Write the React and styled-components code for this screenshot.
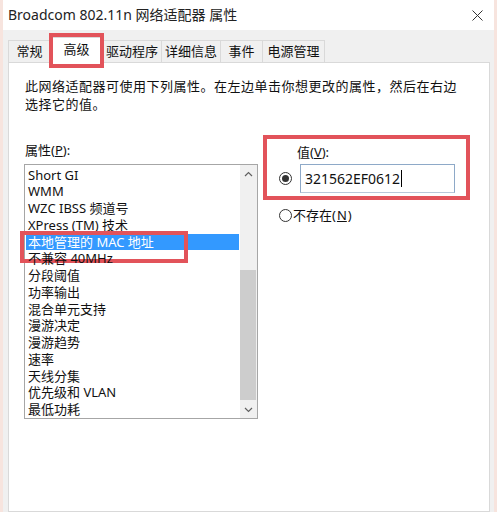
import React from 'react';
import styled, { createGlobalStyle, css } from 'styled-components';

const GlobalStyle = createGlobalStyle`
  html, body {
    margin: 0;
    padding: 0;
    background: #ffffff;
  }
  * {
    box-sizing: border-box;
  }
`;

const uiFont = `"Noto Sans", "Noto Sans CJK SC", sans-serif`;
const red = '#e2535a';

const Window = styled.div`
  width: 497px;
  height: 512px;
  overflow: hidden;
  display: flex;
  flex-direction: column;
  background: #f0f0f0;
  border-left: 3px solid #f7e4de;
  border-right: 3px solid #f7e4de;
  font-family: ${uiFont};
  color: #111;
`;

const TitleBar = styled.div`
  height: 30px;
  flex: none;
  display: flex;
  align-items: center;
  justify-content: space-between;
  padding: 0 11px 0 5px;
  background: #ffffff;
  font-size: 14px;
`;

const Title = styled.span`
  line-height: 20px;
  color: #222;
`;

const CloseIcon = () => (
  <svg width="11" height="11" viewBox="0 0 11 11">
    <path d="M0.5 0.5 L10.5 10.5 M10.5 0.5 L0.5 10.5" stroke="#333" strokeWidth="1" />
  </svg>
);

const Body = styled.div`
  flex: 1;
  display: flex;
  flex-direction: column;
  padding: 10px 4px 0 5px;
`;

const TabStrip = styled.div`
  display: flex;
  align-items: flex-end;
  height: 22px;
`;

const Tab = styled.div`
  position: relative;
  width: ${(p) => p.$w}px;
  height: 22px;
  margin-right: -1px;
  border: 1px solid #d9d9d9;
  border-bottom: 0;
  background: #f0f0f0;
  font-size: 13px;
  line-height: 20px;
  text-align: center;
  ${(p) =>
    p.$active &&
    css`
      height: 26px;
      margin-bottom: -1px;
      background: #ffffff;
      z-index: 1;
      line-height: 22px;
      &::after {
        content: '';
        position: absolute;
        left: -2px;
        right: -2px;
        top: -5px;
        bottom: -5px;
        border: 4px solid ${red};
      }
    `}
`;

const Panel = styled.div`
  flex: 1;
  background: #ffffff;
  border: 1px solid #d9d9d9;
  padding: 14px 15px 0 15px;
`;

const Description = styled.p`
  margin: 0;
  padding-left: 1px;
  font-size: 13px;
  line-height: 18px;
  letter-spacing: 0.5px;
`;

const Content = styled.div`
  display: flex;
  gap: 5px;
  margin-top: 22px;
`;

const LeftColumn = styled.div`
  width: 234px;
  padding-top: 6px;
`;

const FieldLabel = styled.div`
  font-size: 13px;
  line-height: 18px;
  margin-bottom: 5px;
  padding-left: 1px;
`;

const ListBox = styled.div`
  height: 255px;
  border: 1px solid #a6a6a6;
  display: flex;
`;

const Items = styled.div`
  flex: 1;
  padding: 1.6px 1px 0 1px;
`;

const Item = styled.div`
  position: relative;
  height: 16.75px;
  line-height: 16.75px;
  padding-left: 2px;
  font-size: 13px;
  white-space: nowrap;
  ${(p) =>
    p.$selected &&
    css`
      background: #3399ff;
      color: #ffffff;
      &::after {
        content: '';
        position: absolute;
        left: -6px;
        top: -3px;
        width: 160px;
        height: 24px;
        border: 4px solid ${red};
      }
    `}
`;

const ScrollBar = styled.div`
  width: 17px;
  display: flex;
  flex-direction: column;
  background: #f0f0f0;
`;

const ArrowButton = styled.div`
  height: 17px;
  flex: none;
  display: flex;
  align-items: center;
  justify-content: center;
`;

const Track = styled.div`
  flex: 1;
  padding: 88px 1px 0 0;
`;

const Thumb = styled.div`
  height: 130px;
  background: #cdcdcd;
`;

const Chevron = ({ up }) => (
  <svg width="9" height="6" viewBox="0 0 9 6">
    <path
      d={up ? 'M1 5 L4.5 1.5 L8 5' : 'M1 1 L4.5 4.5 L8 1'}
      fill="none"
      stroke="#606060"
      strokeWidth="1.2"
    />
  </svg>
);

const RightColumn = styled.div`
  display: flex;
  flex-direction: column;
`;

const ValueBox = styled.div`
  width: 207px;
  border: 4px solid ${red};
  padding: 5px 11px 3px 12px;
`;

const ValueLabel = styled.div`
  margin-left: 18px;
  font-size: 13px;
  line-height: 16px;
`;

const ValueRow = styled.div`
  display: flex;
  align-items: center;
  gap: 8px;
  margin-top: 4px;
`;

const Radio = styled.span`
  width: 13px;
  height: 13px;
  flex: none;
  border-radius: 50%;
  border: 1px solid #333;
  background: #fff;
  display: flex;
  align-items: center;
  justify-content: center;
  &::after {
    content: '';
    width: 7px;
    height: 7px;
    border-radius: 50%;
    background: ${(p) => (p.$checked ? '#333' : 'transparent')};
  }
`;

const TextBox = styled.div`
  width: 155px;
  height: 29px;
  border: 1px solid #8ea9c8;
  border-bottom-color: #b8c8da;
  display: flex;
  align-items: center;
  padding-left: 4px;
  font-size: 14px;
`;

const Caret = styled.span`
  width: 1px;
  height: 17px;
  margin-left: 1px;
  background: #000;
`;

const NoneRow = styled.label`
  display: flex;
  align-items: center;
  gap: 1px;
  margin-top: 7px;
  padding-left: 16px;
  font-size: 13px;
  line-height: 16px;
`;

const properties = [
  'Short GI',
  'WMM',
  'WZC IBSS 频道号',
  'XPress (TM) 技术',
  '本地管理的 MAC 地址',
  '不兼容 40MHz',
  '分段阈值',
  '功率输出',
  '混合单元支持',
  '漫游决定',
  '漫游趋势',
  '速率',
  '天线分集',
  '优先级和 VLAN',
  '最低功耗',
];

const tabs = [
  { label: '常规', w: 43 },
  { label: '高级', w: 53, active: true },
  { label: '驱动程序', w: 60 },
  { label: '详细信息', w: 60 },
  { label: '事件', w: 43 },
  { label: '电源管理', w: 63 },
];

const App = () => {
  return (
    <>
      <GlobalStyle />
      <Window>
        <TitleBar>
          <Title>Broadcom 802.11n 网络适配器 属性</Title>
          <CloseIcon />
        </TitleBar>
        <Body>
          <TabStrip>
            {tabs.map((t) => (
              <Tab key={t.label} $w={t.w} $active={t.active}>
                {t.label}
              </Tab>
            ))}
          </TabStrip>
          <Panel>
            <Description>
              此网络适配器可使用下列属性。在左边单击你想更改的属性，然后在右边
              <br />
              选择它的值。
            </Description>
            <Content>
              <LeftColumn>
                <FieldLabel>
                  属性(<u>P</u>):
                </FieldLabel>
                <ListBox>
                  <Items>
                    {properties.map((p, i) => (
                      <Item key={p} $selected={i === 4}>
                        {p}
                      </Item>
                    ))}
                  </Items>
                  <ScrollBar>
                    <ArrowButton>
                      <Chevron up />
                    </ArrowButton>
                    <Track>
                      <Thumb />
                    </Track>
                    <ArrowButton>
                      <Chevron />
                    </ArrowButton>
                  </ScrollBar>
                </ListBox>
              </LeftColumn>
              <RightColumn>
                <ValueBox>
                  <ValueLabel>
                    值(<u>V</u>):
                  </ValueLabel>
                  <ValueRow>
                    <Radio $checked />
                    <TextBox>
                      321562EF0612
                      <Caret />
                    </TextBox>
                  </ValueRow>
                </ValueBox>
                <NoneRow>
                  <Radio />
                  不存在(<u>N</u>)
                </NoneRow>
              </RightColumn>
            </Content>
          </Panel>
        </Body>
      </Window>
    </>
  );
};

export default App;
